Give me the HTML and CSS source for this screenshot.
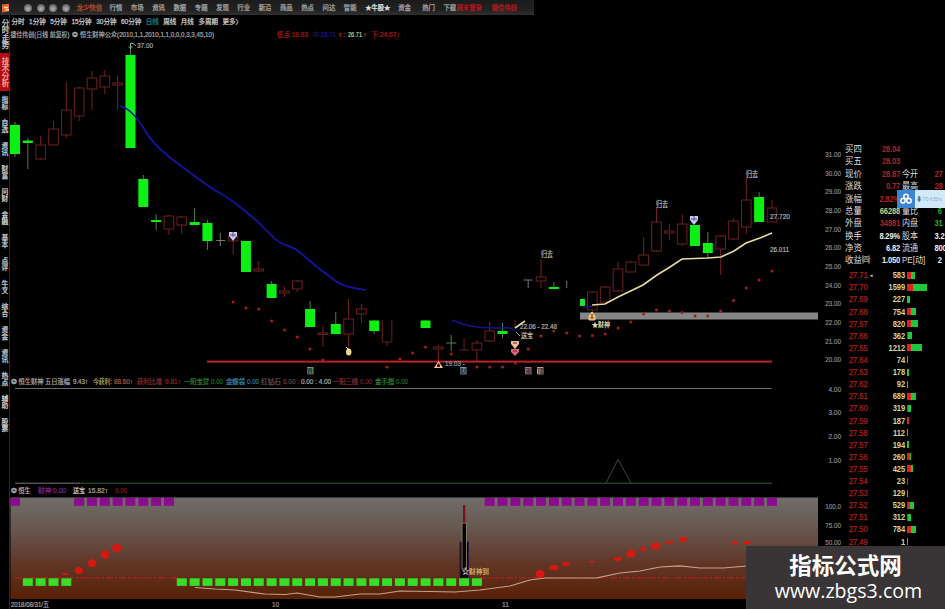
FILE: index.html
```html
<!DOCTYPE html>
<html lang="zh-CN">
<head>
<meta charset="utf-8">
<title>行情</title>
<link rel="stylesheet" href="styles.css">
</head>
<body>
<div class="app">
  <header class="topbar">
    <svg class="logo" viewBox="0 0 8 10"><path d="M0 1L8 0V9L0 10Z" fill="#e8652a"/><path d="M2 4.5h5M4 7h4" stroke="#ffe0c0" stroke-width="1.6"/></svg>
    <div class="orbs"><i></i><i></i><i></i><i></i></div>
    <span class="brand">龙少快信</span>
    <nav class="menu"><span>行情</span><span>市场</span><span>资讯</span><span>数据</span><span>专题</span><span>发现</span><span>行业</span><span>新沿</span><span>商品</span><span>热点</span><span>问达</span><span>智能</span><span class="star">★牛股★</span><span class="fund">资金</span><span>热门</span><span class="dl">下载</span><span class="red">周末登录</span><span class="red">捷佳伟创</span></nav>
  </header>
  <div class="body">
    <aside class="side"><span class="tall">分时走势</span><span class="tall active">技术分析</span><span>指标</span><span>自选</span><span>资讯</span><span>财富</span><span>问财</span><span>金融</span><span>基本</span><span>点评</span><span>牛叉</span><span>综合</span><span>资金</span><span>资讯</span><span>热点</span><span>辅助</span><span>股票</span></aside>
    <main class="main">
      <nav class="periods"><span>分时</span><span>1分钟</span><span>5分钟</span><span>15分钟</span><span>30分钟</span><span>60分钟</span><span class="on">日线</span><span>周线</span><span>月线</span><span>多周期</span><span>更多〉</span></nav>
      <svg id="price" class="price" viewBox="10 28 835 348"></svg>
      <svg id="middle" class="middle" viewBox="10 376 835 109"></svg>
      <svg id="lower" class="lower" viewBox="10 485 835 124"></svg>
    </main>
    <section class="quotes">
      <div class="stats" id="stats"></div>
      <div class="levels" id="levels"></div>
    </section>
  </div>
  <div class="speed"><svg viewBox="0 0 18 18"><g fill="none" stroke="#fff" stroke-width="1.5"><circle cx="9" cy="6.5" r="2.2"/><circle cx="6" cy="10.8" r="2.2"/><circle cx="12" cy="10.8" r="2.2"/></g></svg><span><b>⬇</b>70 KB/s</span></div>
  <div class="mark"><strong>指标公式网</strong><span>www.zbgs3.com</span></div>
</div>
<script src="chart.js"></script>
</body>
</html>
```
FILE: styles.css
```css
* { box-sizing: border-box; }
body { margin: 0; background: #000; color: #bbb; font-family: "Liberation Sans", "Noto Sans CJK SC", sans-serif; }
.app { position: relative; width: 945px; height: 609px; overflow: hidden; background: #000; }
.topbar { display: flex; align-items: center; width: 534px; height: 15px; padding-left: 2px; background: linear-gradient(#1b1b1b, #222 70%, #303030); font-size: 6.4px; line-height: 13px; white-space: nowrap; -webkit-text-stroke: .25px; }
.logo { width: 7px; height: 10px; }
.orbs { display: flex; gap: 4.7px; margin-left: 15px; }
.orbs i { width: 8px; height: 8px; border-radius: 50%; background: radial-gradient(circle at 50% 60%, #bbb, #777 50%, #3a3a3a); }
.brand { width: 33px; margin-left: 6.5px; color: #b04a30; }
.menu { display: flex; color: #a5a5a5; }
.menu span { width: 21.3px; }
.menu .star { width: 33px; color: #e5e5e5; font-size: 6.3px; }
.menu .fund { width: 24px; }
.menu .dl { width: 13px; }
.menu .red { width: 35px; color: #b3191c; }
.body { display: flex; height: 594px; }
.side { display: flex; flex-direction: column; width: 10px; border-right: 1px solid #292929; font-size: 6.8px; color: #d0d0d0; -webkit-text-stroke: .25px; }
.side span { display: flex; align-items: center; height: 23px; writing-mode: vertical-rl; line-height: 9px; width: 9px; justify-content: center; }
.side .tall { height: 38px; font-size: 7.5px; }
.side .active { background: #b50b0b; color: #eaa; }
.main { width: 835px; }
.periods { display: flex; gap: 4.55px; height: 13px; padding-left: 1.5px; font-size: 6.5px; line-height: 13px; color: #c8c8c8; white-space: nowrap; -webkit-text-stroke: .25px; }
.periods .on { color: #197f7f; }
.main svg { display: block; width: 835px; }
.price { height: 348px; }
.middle { height: 109px; }
.lower { height: 124px; }
.quotes { width: 100px; padding-top: 128px; overflow: hidden; font-size: 9px; white-space: nowrap; }
.stat { display: grid; grid-template-columns: 22px 32px 19px 26px; column-gap: 1px; height: 12.38px; line-height: 12.38px; color: #ddd; }
.stat span, .stat em { font-size: 8.6px; }
.stat b { text-align: right; letter-spacing: -.2px; transform: scaleX(.84); transform-origin: right; }
.stat em { font-style: normal; padding-left: 1px; transform: scaleX(.94); transform-origin: left; }
.stat span { transform: scaleX(.98); transform-origin: left; }
.stat b:last-child { text-align: left; padding-left: 16px; transform-origin: left; }
.stat.far b:last-child { padding-left: 20px; }
.levels { padding-top: 2.4px; }
.level { display: grid; grid-template-columns: 24px 6px 30px 30px; height: 12.11px; align-items: center; }
.level b { letter-spacing: -.1px; color: #a52222; margin-left: 4px; font-weight: normal; -webkit-text-stroke: .25px; transform: scaleX(.84); transform-origin: left; }
.level u { color: #ddd; font-size: 5px; text-decoration: none; padding-left: 1px; }
.level .vol { color: #d3d39a; font-weight: bold; -webkit-text-stroke: 0; text-align: right; margin: 0; transform-origin: right; }
.bar { display: flex; height: 7px; margin-left: 2px; }
.bar i { background: #d22; }
.bar i + i { background: #20c83a; }
.r { color: #b42222; }
.y { color: #cfcf80; }
.g { color: #20b020; }
.w { color: #eee; }
.speed { position: absolute; left: 897px; top: 190px; width: 48px; height: 18px; display: flex; background: #d4e9f8; font-size: 6.2px; line-height: 17px; color: #8db7d6; white-space: nowrap; }
.speed svg { width: 18px; height: 18px; background: #3d85d4; flex: none; }
.speed span { padding-left: 1px; letter-spacing: -.25px; }
.speed b { color: #3878b0; }
.mark { position: absolute; left: 746px; top: 546px; width: 199px; height: 63px; background: #393435; color: #fff; display: flex; flex-direction: column; align-items: center; }
.mark strong { font: bold 22.5px/36px "Noto Sans CJK SC", sans-serif; }
.mark span { font: 19.6px/20px "Open Sans", sans-serif; margin-left: 6px; margin-top: -1px; }
```
FILE: chart.js
```javascript
const X = i => 15 + 12.83 * i;
const text = (x, y, s, w, fill, size = 7) =>
  `<text x="${x}" y="${y}" font-size="${size}" fill="${fill}" stroke="${fill}" stroke-width=".2" textLength="${w}" lengthAdjust="spacingAndGlyphs">${s}</text>`;
const box = (x, y, w, h, fill) => `<rect x="${x}" y="${y}" width="${w}" height="${h}" fill="${fill}"/>`;
const path = (d, stroke, w = 1, extra = '') => `<path d="${d}" fill="none" stroke="${stroke}" stroke-width="${w}" ${extra}/>`;
const legend = (y, items) => items.map(([x, s, w, c]) => text(x, y, s, w, c, 6.8)).join('');
const axis = rows => rows.map(([s, y]) => text(841 - s.length * 3.15, y + 3, s, s.length * 3.15, '#8d8d8d', 8)).join('');

// index, colour, high, body top, body bottom, low
const candles = [
  [0,'g',122,125,154,157],[1,'g',138,140.5,143,169],[2,'r',136,145,159,160],[3,'r',121,129,145,145],
  [4,'r',82,110,135,138],[5,'r',87,88,116,121],[6,'r',71,78,89,110],[7,'r',70,76,87,94],[8,'r',76,83,85,110],
  [9,'g',47,55,148,148],[10,'g',175,179,207,207],[11,'g',214,220,222,230],[12,'r',215,216,229,235],
  [13,'r',216,217,225,234],[14,'g',208,222,225,225],[15,'g',220,223,241,250],[17,'r',235,236,241,254],
  [18,'g',241,241,272,272],[19,'r',261,269,271,272],[20,'g',281,284,298,298],[21,'r',286,291,293,297],
  [22,'r',280,281,289,292],[23,'g',301,309,327,327],[24,'r',326,333,334.5,347],[25,'g',312,324,334,334],
  [26,'r',299,319,334,350],[27,'r',304,309,314,323],[28,'g',320,320.5,331,334],[32,'g',320,320.5,328,328],
  [33,'r',345,347,349,361],[36,'r',340,343,350,362],[37,'r',322,331,341,342],[38,'g',323,331,334,338],
  [41,'r',259,277,281,288],[42,'g',282,287,289,289],[45,'r',291,292,310,316],[46,'r',286,287,302,303],
  [47,'r',262,269,291,292],[48,'r',261,262,272,272],[49,'r',237,255,265,265],[50,'r',207,222,251,252],
  [51,'r',224,231,233,240],[52,'r',214,224,244,246],[53,'g',225,225,246,246],[54,'g',232,243,253,259],
  [55,'r',235,236,249,275],[56,'r',218,221,239,240],[57,'r',176,200,227,234],[58,'g',192,197,222,222],[59,'r',200,208,222,222]
];
const dots = [[17,302],[18,308],[19,309],[20,321],[21,330],[22,337],[23,349],[24,360],[29,367],[30,359],[31,353],[32,347],
  [34,354],[36,367],[37,367],[38,367],[39,363],[40,349],[41,336],[42,331],[43,333],[44,336],[45,335.5],[46,334],[47,328],
  [48,322],[49,314],[50,310],[51,311],[52,312.5],[53,316],[54,316],[55,311],[56,300.5],[57,288],[58,280],[59,271]];

let p = legend(37, [[10.5,'捷佳伟创(日线 前复权)',59,'#aaa'],[72,'❂',6,'#bbb'],[80,'恒生财神公众(2010,1,1,2010,1,1,0,0,0,3,3,45,10)',134,'#aaa'],
  [277,'低点:18.83',31,'#a01c1c'],[313,'中:26.71',23,'#16168c'],[337.5,'↑:',8,'#b33'],[348,'26.71',14,'#a5d8b8'],[363,'↑',4,'#b33'],[371,'下:24.67↑',29,'#a01c1c']]);
p += box(580, 312.5, 238, 7, '#868686');
for (const [i, c, hi, top, bot, lo] of candles) {
  const x = X(i), h = bot - top;
  if (c === 'g') {
    p += path(`M${x} ${hi}V${lo}`, '#4d8055') + box(x - 5, top, 10, h, '#0cf014');
  } else {
    p += path(`M${x} ${hi}V${top}M${x} ${bot}V${lo}`, '#762020');
    p += `<rect x="${x - 4.8}" y="${top}" width="9.6" height="${h}" fill="#050000" stroke="#6b2020"/>`;
  }
}
p += path(`M${X(29)-4.8} 320V342H${X(29)+4.8}V320M${X(29)} 342V346M${X(35)-4.8} 350H${X(35)+4.8}M${X(35)} 338V350M515 320V328`, '#6b2020');
p += path(`M${X(16)-4} 240.5h9M${X(16)} 233v13M523.5 280h9M${X(40)} 280v8M${X(43)} 281v7`, '#777');
p += path(`M${X(34)-5} 343h10M${X(34)} 335v16`, '#527a5b') + box(580, 299, 5, 7, '#20e030');
p += path('M120 106C126 107 133 112 143 127C148 137 158 149 177 163L207 185C220 194 230 198 240 207L257 221L273 237C282 246 291 246 297 250L317 267L337 282C345 287 357 289 366 290', '#1414a5', 1.7);
p += path('M452 320C470 328 483 328 503 328Q510 327 515 330M583 308L592 306', '#14148c', 1.5);
p += path('M592 305L605 304L618 297L643 285L657 275L670 267L682 259L708 258L721 257L734 251L746 243L760 238L772 233M515 328L525 321', '#e6d99a', 1.6);
p += box(207, 360.6, 565, 2, '#bd2221');
p += dots.map(([i, y]) => `<circle cx="${X(i)}" cy="${y}" r="1.5" fill="#a71d1d"/>`).join('');
p += path('M130.5 49V43M128.7 47h4M131 43l3 1 2 2', '#70b58c') + text(137, 48, '37.00', 16, '#aaa', 7.5);
p += [[233, 236], [694, 220]].map(([x, y]) => `<path d="M${x-4} ${y-4}h8v4l-4 5l-4-5Z" fill="#c8c8f0"/>` + path(`M${x-3} ${y-1}h6M${x} ${y-4}v5`, '#5545a0')).join('');
p += '<ellipse cx="348.7" cy="352" rx="2.7" ry="3.5" fill="#f2db88"/><path d="M346 347l3 3" stroke="#fff"/>';
p += '<path d="M434 368l4.5-7 4.5 7Z" fill="#f0cc9b"/><path d="M437 365l1.5-2 1.5 2v2h-3Z" fill="#600"/>' + text(445, 365.5, '19.03 -', 20, '#999', 7);
p += '<path d="M511 341h8v3l-4 5l-4-5Z" fill="#efc09a"/><path d="M511 349h8v3l-4 4l-4-4Z" fill="#dc6670"/>' + path('M513 343h4M513 351h4', '#814');
p += text(520, 328.5, '22.06 - 22.48', 37, '#b5b5b5', 7.5) + text(521, 338, '送宝', 12, '#c5c5c5') + path('M516 332l4 4', '#aaa');
p += [[541, 257, 12], [656, 207, 12], [746, 177, 12]].map(([x, y, w]) => text(x, y, '归去', w, '#bbb', 7.5)).join('');
p += text(770, 219, '27.720', 20, '#b5b5b5', 8) + text(770, 251.5, '26.011', 19, '#b5b5b5', 8);
p += '<path d="M592 312l3 4v4h-6v-4Z" fill="#e9c47f" stroke="#e9c47f"/><path d="M592 314v3.5M590.5 318h3" fill="none" stroke="#5a2500"/>';
p += text(592, 327, '★财神', 18, '#eee8bd', 7);
p += [[307, '跌', '#6f9c76'], [460, '财', '#6d9bbb'], [525, '涨', '#b97784'], [537, '顶', '#b8a28a']].map(([x, s, c]) => box(x, 367, 6.5, 7.5, c) + text(x, 373.5, s, 6.5, '#222', 6.5)).join('');
p += axis(['31.00','30.00','29.00','28.00','27.00','26.00','25.00','24.00','23.00','22.00','21.00','20.00'].map((s, i) => [s, 154 + i * 18.65]));
document.getElementById('price').innerHTML = p;

let m = legend(383.5, [[10.5,'❂',6,'#bbb'],[18.5,'恒生财神',25,'#aaa'],[45,'五日涨幅',25,'#aaa'],[73,'9.43↑',15,'#aaa'],[93,'今获利:',19,'#aaa360'],[114,'88.60↑',19,'#a85a40'],
  [137,'获利比增',25,'#8d2626'],[165,'9.81↑',16,'#8d2626'],[184,'一阳宝贷',25,'#258636'],[211,'0.00',12,'#1d6c2b'],[226,'金蝶袋',19,'#3383a5'],[247,'0.00',12,'#33789a'],
  [261,'红钻石',20,'#6d5353'],[283,'0.00 :',16,'#674444'],[301,'0.00 : 4.00',30,'#aaa'],[333,'一阳三线',25,'#88303a'],[360,'0.00',12,'#702636'],[375,'金手指',19,'#298b32'],[396,'0.00',12,'#216d2b']]);
m += path('M15 388.5H772', '#686f52') + path('M15 483.2H80', '#777') + path('M80 483.2H772', '#2c6531') + path('M606 483L618 459.5L631 483', '#3d493d');
m += axis([['4.00',389],['3.00',412],['2.00',436],['1.00',460]]);
document.getElementById('middle').innerHTML = m;

let l = '<defs><linearGradient id="sky" x1="0" y1="0" x2="0" y2="1"><stop offset="0" stop-color="#716d69"/><stop offset=".3" stop-color="#685850"/><stop offset=".65" stop-color="#613627"/><stop offset="1" stop-color="#592005"/></linearGradient></defs>';
l += box(10.5, 497.5, 807.5, 101.5, 'url(#sky)');
l += legend(493, [[10.5,'❂',6,'#bbb'],[18.5,'恒生',12,'#bbb'],[38,'财神:0.00',28,'#872587'],[73,'送宝',12,'#ccc'],[88,'15.82↑',20,'#aaa'],[115,'0.00',12,'#841b1b']]);
for (let i = 0; i < 60; i++) {
  const x = X(i) - 5;
  if (i === 0 || (i > 4 && i < 13) || i > 36) l += box(i ? x : 10.5, 498, i ? 10 : 9.5, 7.8, '#8c0b91');
}
l += path('M15 577.8H178M480 577.8H747', '#b8261c', 1, 'stroke-dasharray="7 2 2 2"');
l += path('M540 573L566 564L592 562L618 559L643 549L656 547L683 539', '#8b2920', .8, 'stroke-dasharray="5 3"');
l += [[65,574,3,1],[79,570.5,4,3.5],[92,563,4,4],[105,554.5,4,4.5],[117,548,5,4],[540,574,4.5,4],[554,567.5,4.5,2.5],[566,564,4,2],[592,562,2.5,1],[618,559,4,2],[631,553.5,4.5,4],[643,549,3,2],[656,546,4.5,3.5],[669,542.5,4,1.2],[683,539.5,4,2.5],[735,543,3,1.5],[747,542.5,4,1.5]]
  .map(([x, y, a, b]) => `<ellipse cx="${x}" cy="${y}" rx="${a}" ry="${b}" fill="#d71812"/>`).join('');
l += path('M195 587.5L215 589L235 590L265 594L285 594.5L297 593L320 597L335 597L360 594L380 594L400 591L430 591.5L455 592L480 590L510 586L530 580L545 578L597 577.8L620 573L640 571L660 567L680 565.8L700 568L723 568L747 566', '#c7a08f', 1.2);
l += '<rect x="460" y="542" width="8.5" height="36" fill="#080008" stroke="#32153e"/>' + box(463, 505, 2.3, 19, '#76101c');
l += '<rect x="462" y="523" width="4.5" height="46" fill="#050505" stroke="#887e61" stroke-width=".9"/>';
for (let i = 1; i < 37; i++) if (i < 5 || i > 12) l += box(X(i) - 5, 578.3, 10, 7.6, '#38dd25');
l += text(462, 573.5, '☆', 7, '#ddd', 8) + text(469, 573.5, '财神到', 20, '#d7b66c', 7);
l += text(11, 607, '2018/08/31/五', 38, '#aaa', 7.5) + text(272, 607, '10', 7, '#999', 7) + text(502, 607, '11', 7, '#999', 7);
l += axis([['100.0',506],['75.00',525],['50.00',542]]);
document.getElementById('lower').innerHTML = l;

const stats = [['买四','28.04','r','','',''],['买五','28.03','r','','',''],['现价','28.87','r','今开','27','r'],['涨跌','0.77','r','最高','28','r'],
  ['涨幅','2.82%','r','','',''],['总量','66288','y','量比','6','g far'],['外盘','34881','r','内盘','31','g'],['换手','8.29%','w','股本','3.2','w'],
  ['净资','6.82','w','流通','800','w'],['收益㈣','1.050','w','PE[动]','2','w far']];
document.getElementById('stats').innerHTML = stats.map(([a, b, c, d, e, f]) =>
  `<div class="stat ${f.includes('far') ? 'far' : ''}"><span>${a}</span><b class="${c}">${b}</b><em>${d}</em><b class="${f}">${e}</b></div>`).join('');

// price, volume, sell width, buy width
const levels = [['27.71',583,4,4],['27.70',1599,6,14],['27.69',227,0,3],['27.68',754,4,5],['27.67',820,4,7],['27.66',362,1,4],['27.65',1212,4,11],
  ['27.64',74,0,1],['27.63',178,0,2],['27.62',92,0,1],['27.61',689,4,5],['27.60',319,1,3],['27.59',187,2,0],['27.58',112,0,1],['27.57',194,0,2],
  ['27.56',260,3,1],['27.55',425,4,2],['27.54',23,.5,0],['27.53',129,0,1],['27.52',529,3,4],['27.51',312,1,3],['27.50',784,4,5],['27.49',1,0,.4]];
document.getElementById('levels').innerHTML = levels.map(([a, b, s, g], i) =>
  `<div class="level"><b>${a}</b><u>${i ? '' : '◂'}</u><b class="vol">${b}</b><span class="bar"><i style="width:${s}px"></i><i style="width:${g}px"></i></span></div>`).join('');
```
